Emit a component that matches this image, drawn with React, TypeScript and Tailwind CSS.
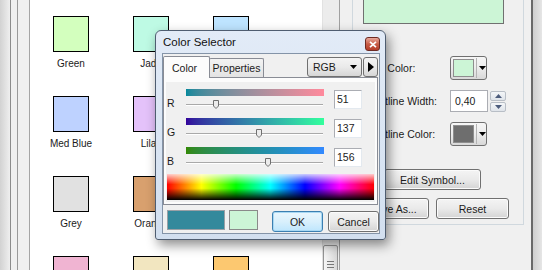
import React from "react";

type Sw = { name: string; cls: string };

const swatches: Sw[] = [
  { name: "Green", cls: "bg-[#d3ffbe]" },
  { name: "Jade", cls: "bg-[#befae4]" },
  { name: "", cls: "bg-[#bee4ff]" },
  { name: "Med Blue", cls: "bg-[#bed2ff]" },
  { name: "Lilac", cls: "bg-[#e4c2fa]" },
  { name: "", cls: "bg-[#ffbee8]" },
  { name: "Grey", cls: "bg-[#e1e1e1]" },
  { name: "Orange", cls: "bg-[#d8a06e]" },
  { name: "", cls: "bg-[#f0e1b4]" },
  { name: "", cls: "bg-[#f0b4d2]" },
  { name: "", cls: "bg-[#f2e6c0]" },
  { name: "", cls: "bg-[#fcc870]" },
];

const sliders = [
  { label: "R", value: 51, bar: "from-[#00899c] to-[#ff899c]" },
  { label: "G", value: 137, bar: "from-[#33009c] to-[#33ff9c]" },
  { label: "B", value: 156, bar: "from-[#338900] to-[#3389ff]" },
];

function DownTri({ color = "#000" }: { color?: string }) {
  return (
    <svg width="7" height="4" viewBox="0 0 7 4">
      <path d="M0 0H7L3.5 4Z" fill={color} />
    </svg>
  );
}

function Btn({ className, children }: { className: string; children: React.ReactNode }) {
  return (
    <div
      className={`flex items-center justify-center rounded-[3px] border border-[#707070] bg-linear-to-b from-[#f4f4f4] via-[#eaeaea] to-[#d4d4d4] shadow-[inset_0_0_0_1px_#fbfbfb] text-[10.5px] leading-[12px] ${className}`}
    >
      {children}
    </div>
  );
}

function ColorBtn({ swatch }: { swatch: string }) {
  return (
    <div className="flex h-[24px] w-[37px] items-center rounded-[3px] border border-[#707070] bg-linear-to-b from-[#f6f6f6] via-[#ececec] to-[#d8d8d8] pl-[2px]">
      <div className={`h-[18px] w-[21px] border border-[#8e8e8e] ${swatch}`} />
      <div className="ml-[2px] h-[20px] w-px bg-[#b4b4b4]" />
      <div className="ml-[2px] flex items-center">
        <DownTri />
      </div>
    </div>
  );
}

function SpinBtn({ up }: { up: boolean }) {
  return (
    <div className="flex h-[10px] w-[16px] items-center justify-center rounded-[2px] border border-[#b8bec6] bg-linear-to-b from-[#f4f6f8] to-[#dfe4ea]">
      <svg width="7" height="4" viewBox="0 0 7 4">
        <path d={up ? "M0 4H7L3.5 0Z" : "M0 0H7L3.5 4Z"} fill="#4c5c7c" />
      </svg>
    </div>
  );
}

export default function App() {
  return (
    <div className="relative flex h-[270px] w-[542px] overflow-hidden bg-[#f0f0f0] font-['Liberation_Sans',Arial,sans-serif] text-[#1b1b1b]">
      {/* left window frame */}
      <div className="flex h-full shrink-0">
        <div className="w-[10px] bg-linear-to-r from-[#d2d2d2] to-[#efefef]" />
        <div className="w-px bg-[#8c8c8c]" />
        <div className="w-[6px] bg-[#f0f0f0]" />
        <div className="w-px bg-[#9a9a9a]" />
        <div className="w-[11px] bg-[#f0f0f0]" />
        <div className="w-px bg-[#a5a5a5]" />
      </div>

      {/* swatch list */}
      <div className="grid h-full w-[292px] shrink-0 auto-rows-[80px] grid-cols-[repeat(3,80px)] content-start bg-white pl-px">
        {swatches.map((s, i) => (
          <div key={i} className="flex flex-col items-center pt-[16px]">
            <div className={`h-[36px] w-[36px] border border-black ${s.cls}`} />
            {s.name && <div className="mt-[6px] text-[10px] leading-[12px]">{s.name}</div>}
          </div>
        ))}
      </div>

      {/* scrollbar */}
      <div className="flex h-full w-[17px] shrink-0 flex-col border-l border-[#e2e2e2] bg-[#ececec]">
        <div className="mt-[245px] flex h-[40px] w-[15px] shrink-0 flex-col items-center gap-[2px] rounded-[2px] border border-[#959595] bg-linear-to-r from-[#f6f6f6] to-[#d8d8d8] pt-[15px]">
          <div className="h-px w-[7px] bg-[#777]" />
          <div className="h-px w-[7px] bg-[#777]" />
          <div className="h-px w-[7px] bg-[#777]" />
          <div className="h-px w-[7px] bg-[#777]" />
        </div>
      </div>

      {/* right panel */}
      <div className="flex h-full w-[203px] shrink-0 border-l border-[#a0a0a0]">
        <div className="ml-[12px] flex h-[225px] w-[172px] shrink-0 flex-col border-x border-b border-[#d0d8de]">
          <div className="ml-[10px] h-[24px] w-[141px] border-x border-b border-[#707070] bg-[#ccf5d6]" />
          <div className="mt-[32px] flex flex-col gap-[10px] text-[10.5px] leading-[12px]">
            <div className="flex h-[24px] items-center">
              <div className="w-[97px] pl-[18px]">Fill Color:</div>
              <ColorBtn swatch="bg-[#ccf5d6]" />
            </div>
            <div className="flex h-[22px] items-center">
              <div className="w-[97px] pl-[18px]">Outline Width:</div>
              <div className="h-[22px] w-[38px] border border-[#abadb3] bg-white pl-[4px] leading-[20px]">0,40</div>
              <div className="ml-[2px] flex flex-col gap-px">
                <SpinBtn up />
                <SpinBtn up={false} />
              </div>
            </div>
            <div className="flex h-[24px] items-center">
              <div className="w-[97px] pl-[18px]">Outline Color:</div>
              <ColorBtn swatch="bg-[#6e6e6e]" />
            </div>
          </div>
          <Btn className="ml-[31px] mt-[23px] h-[21px] w-[97px]">Edit Symbol...</Btn>
          <div className="mt-[8px] flex">
            <Btn className="ml-[4px] h-[21px] w-[72px]">Save As...</Btn>
            <Btn className="ml-[7px] h-[21px] w-[73px]">Reset</Btn>
          </div>
        </div>
        <div className="w-[7px] shrink-0" />
        <div className="w-[2px] shrink-0 bg-[#6a6a6a]" />
        <div className="w-[9px] shrink-0 bg-linear-to-r from-[#cfcfcf] to-[#e6e6e6]" />
      </div>

      {/* Color Selector dialog */}
      <div className="absolute left-[155px] top-[30px] flex h-[210px] w-[231px] flex-col rounded-t-[6px] rounded-b-[3px] border border-[#4f5d70] bg-linear-to-b from-[#e2ebf7] to-[#d2dfef] shadow-[3px_5px_12px_rgba(0,0,0,0.45)]">
        <div className="flex h-[22px] shrink-0 items-start pl-[7px] pr-[5px]">
          <span className="mt-[4px] text-[11.5px] leading-[14px] text-[#111]">Color Selector</span>
          <div className="ml-auto mt-[6px] flex h-[14px] w-[15px] items-center justify-center rounded-[3px] border border-[#6d2a22] bg-linear-to-b from-[#e7a99d] via-[#c85c46] to-[#b43c28]">
            <svg width="8" height="7" viewBox="0 0 8 7">
              <path d="M1 0.8L7 6.2M7 0.8L1 6.2" stroke="#fff" strokeWidth="1.7" />
            </svg>
          </div>
        </div>

        <div className="ml-[6px] flex h-[181px] w-[218px] flex-col border border-[#8494a8] bg-[#f0f0f0] text-[10.5px] leading-[12px]">
          {/* tabs */}
          <div className="flex h-[23px] shrink-0 items-end">
            <div className="relative z-10 -mb-px flex h-[22px] w-[47px] items-center rounded-t-[2px] border border-b-0 border-[#898c95] bg-[#fcfcfc] pl-[8px]">
              Color
            </div>
            <div className="-ml-px flex h-[19px] w-[55px] items-center justify-center rounded-t-[2px] border border-b-0 border-[#898c95] bg-linear-to-b from-[#f3f3f3] to-[#e3e3e3]">
              Properties
            </div>
            <div className="ml-auto flex self-start">
              <div className="mt-[3px] flex h-[20px] w-[55px] items-center rounded-[3px] border border-[#707070] bg-linear-to-b from-[#f4f4f4] via-[#eaeaea] to-[#d6d6d6] pl-[5px] pr-[4px]">
                <span>RGB</span>
                <span className="ml-auto flex">
                  <DownTri />
                </span>
              </div>
              <div className="ml-px mr-px mt-[3px] flex h-[20px] w-[15px] items-center justify-center rounded-[3px] border border-[#707070] bg-linear-to-b from-[#f4f4f4] via-[#eaeaea] to-[#d6d6d6]">
                <svg width="6" height="10" viewBox="0 0 6 10">
                  <path d="M0 0L6 5L0 10Z" fill="#000" />
                </svg>
              </div>
            </div>
          </div>

          {/* tab page */}
          <div className="h-[128px] w-[215px] shrink-0 border border-[#898c95] bg-[#fcfcfc] pl-[2px] pt-[4px]">
            <div className="flex h-[120px] w-[209px] flex-col bg-[#f0f0f0] pt-[5px]">
              {sliders.map((s) => (
                <div key={s.label} className="flex h-[29px] shrink-0">
                  <div className="w-[20px] pl-px pt-[10px]">{s.label}</div>
                  <div className="flex w-[138px] flex-col">
                    <div className={`mt-[2px] h-[7px] bg-linear-to-r ${s.bar}`} />
                    <div className="relative mt-[3px] h-[10px]">
                      <div className="absolute left-0 right-px top-[5px] h-px bg-[#a9a9a9]" />
                      <div className="absolute left-0 right-px top-[6px] h-px bg-white" />
                      <svg
                        className="absolute top-[1px]"
                        style={{ left: Math.round(s.value * 0.5 + 1) }}
                        width="6"
                        height="9"
                        viewBox="0 0 6 9"
                      >
                        <path d="M0.5 0.5H5.5V6L3 8.5L0.5 6Z" fill="#ececec" stroke="#707070" />
                      </svg>
                    </div>
                  </div>
                  <div className="ml-[10px] mt-[3px] h-[19px] w-[28px] border border-[#abadb3] border-b-[#e3e9ef] border-r-[#e3e9ef] bg-white pl-[2px] leading-[17px]">
                    {s.value}
                  </div>
                </div>
              ))}
              <div className="relative ml-px h-[26px] w-[207px] shrink-0 bg-[linear-gradient(to_right,#ff0000,#ffff00,#00ff00,#00ffff,#0000ff,#ff00ff,#ff0000)]">
                <div className="absolute inset-0 bg-[linear-gradient(to_bottom,rgba(255,255,255,0.8),rgba(255,255,255,0)_40%,rgba(0,0,0,0)_55%,#000000)]" />
              </div>
            </div>
          </div>

          {/* bottom row */}
          <div className="mt-[5px] flex h-[21px] items-start">
            <div className="ml-[4px] h-[20px] w-[58px] border border-[#9aa0a6] bg-[#33899c]" />
            <div className="ml-[4px] h-[20px] w-[29px] border border-[#8a8a8a] bg-[#ccf5d6]" />
            <div className="ml-[14px] mt-px flex h-[21px] w-[51px] items-center justify-center rounded-[3px] border border-[#3c7fb1] bg-linear-to-b from-[#eaf6fd] via-[#d9f0fc] to-[#bee6fd] shadow-[inset_0_0_0_1px_#a8d8f3]">
              OK
            </div>
            <Btn className="ml-[5px] mt-px h-[21px] w-[51px]">Cancel</Btn>
          </div>
        </div>
      </div>
    </div>
  );
}
